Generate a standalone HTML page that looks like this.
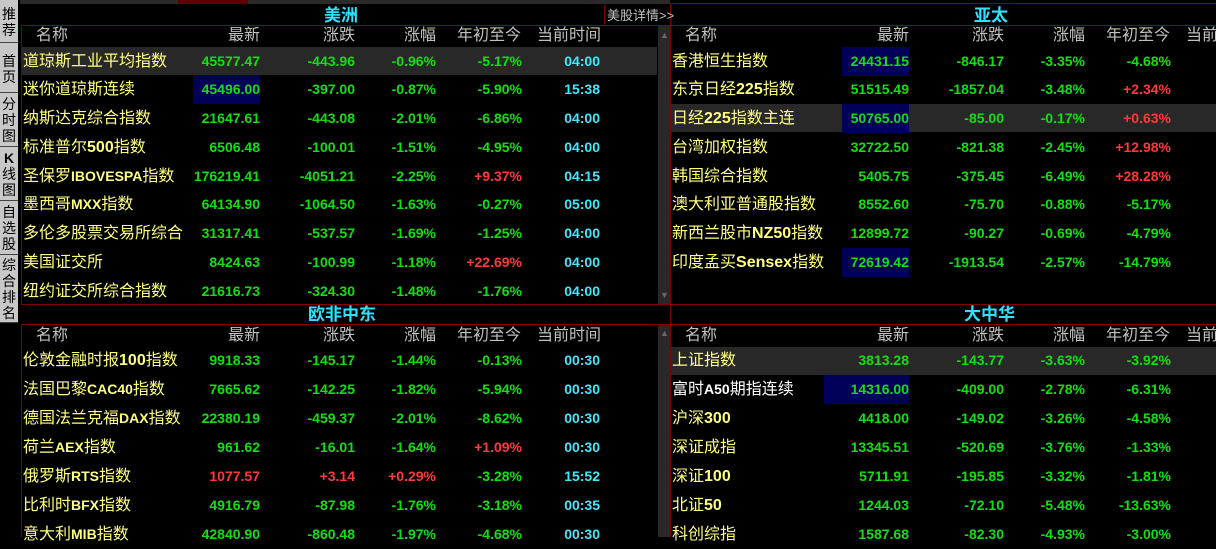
<!DOCTYPE html>
<html><head><meta charset="utf-8"><style>
*{margin:0;padding:0;box-sizing:border-box}
body{width:1216px;height:537px;background:#000;position:relative;overflow:hidden;font-family:"Liberation Sans","Noto Sans CJK SC",sans-serif}
div{position:absolute;white-space:nowrap}
.side{left:0;width:18px;background:#c8c8c8;border-bottom:1px solid #444;color:#000;font-size:14px;line-height:16px;text-align:center;overflow:hidden}
.hl{background:#282828}
.bx{background:#000058}
.ln{background:#800000}
.t{color:#30e0ff;font-size:17px;font-weight:bold;line-height:20px}
.h{color:#c0c0c0;font-size:16px;line-height:20px}
.r{height:29px;line-height:29px;font-size:14px;font-weight:bold}
.nm{color:#ffff80;font-size:16px;font-weight:normal}
.g{color:#10e010}.rd{color:#ff3838}.cy{color:#40e8ff}
.a{text-align:right}
</style></head><body>
<div style="left:20px;top:0;width:650px;height:4px;background:#2a2a2a"></div>
<div style="left:178px;top:0;width:70px;height:4px;background:#600000"></div>
<div class="side" style="top:0;height:43px;padding-top:6px">推<br>荐</div>
<div class="side" style="top:43px;height:50px;padding-top:10px">首<br>页</div>
<div class="side" style="top:93px;height:54px;padding-top:3px">分<br>时<br>图</div>
<div class="side" style="top:147px;height:54px;padding-top:3px"><b>K</b><br>线<br>图</div>
<div class="side" style="top:201px;height:54px;padding-top:3px">自<br>选<br>股</div>
<div class="side" style="top:255px;height:68px;padding-top:2px">综<br>合<br>排<br>名</div>
<div class="ln" style="left:670px;top:3px;width:546px;height:1px"></div>
<div class="ln" style="left:670px;top:25px;width:546px;height:1px"></div>
<div class="ln" style="left:21px;top:25px;width:650px;height:1px"></div>
<div class="ln" style="left:21px;top:25px;width:1px;height:279px"></div>
<div class="ln" style="left:21px;top:304px;width:1195px;height:1px"></div>
<div class="ln" style="left:21px;top:324px;width:1195px;height:1px"></div>
<div class="ln" style="left:21px;top:324px;width:1px;height:213px"></div>
<div class="ln" style="left:670px;top:3px;width:1px;height:534px"></div>
<div class="ln" style="left:604px;top:5px;width:1px;height:21px"></div>
<div style="left:658px;top:26px;width:12px;height:278px;background:#282828"></div>
<div style="left:658px;top:325px;width:12px;height:212px;background:#282828"></div>
<div style="left:660px;top:30px;color:#666;font-size:9px">▲</div>
<div style="left:660px;top:290px;color:#666;font-size:9px">▼</div>
<div style="left:660px;top:328px;color:#666;font-size:9px">▲</div>
<div class="t" style="left:324px;top:6px">美洲</div>
<div class="t" style="left:974px;top:6px">亚太</div>
<div class="t" style="left:308px;top:305px">欧非中东</div>
<div class="t" style="left:964px;top:305px">大中华</div>
<div style="left:607px;top:7px;color:#c0c0c0;font-size:13px;line-height:18px">美股详情&gt;&gt;</div>
<div class="hl" style="left:22px;top:47px;width:635px;height:28px"></div>
<div class="bx" style="left:193px;top:75px;width:67px;height:29px"></div>
<div class="bx" style="left:842px;top:47px;width:67px;height:29px"></div>
<div class="hl" style="left:671px;top:104px;width:545px;height:28px"></div>
<div class="bx" style="left:842px;top:104px;width:67px;height:29px"></div>
<div class="bx" style="left:842px;top:248px;width:67px;height:29px"></div>
<div class="hl" style="left:671px;top:347px;width:545px;height:28px"></div>
<div class="bx" style="left:824px;top:375px;width:85px;height:29px"></div>

<div class="h" style="left:36px;top:26px">名称</div><div class="h a" style="left:160px;width:100px;top:26px">最新</div><div class="h a" style="left:255px;width:100px;top:26px">涨跌</div><div class="h a" style="left:336px;width:100px;top:26px">涨幅</div><div class="h" style="left:457px;top:26px">年初至今</div><div class="h" style="left:537px;top:26px">当前时间</div>
<div class="h" style="left:685px;top:26px">名称</div><div class="h a" style="left:809px;width:100px;top:26px">最新</div><div class="h a" style="left:904px;width:100px;top:26px">涨跌</div><div class="h a" style="left:985px;width:100px;top:26px">涨幅</div><div class="h" style="left:1106px;top:26px">年初至今</div><div class="h" style="left:1186px;top:26px">当前时间</div>
<div class="h" style="left:36px;top:326px">名称</div><div class="h a" style="left:160px;width:100px;top:326px">最新</div><div class="h a" style="left:255px;width:100px;top:326px">涨跌</div><div class="h a" style="left:336px;width:100px;top:326px">涨幅</div><div class="h" style="left:457px;top:326px">年初至今</div><div class="h" style="left:537px;top:326px">当前时间</div>
<div class="h" style="left:685px;top:326px">名称</div><div class="h a" style="left:809px;width:100px;top:326px">最新</div><div class="h a" style="left:904px;width:100px;top:326px">涨跌</div><div class="h a" style="left:985px;width:100px;top:326px">涨幅</div><div class="h" style="left:1106px;top:326px">年初至今</div><div class="h" style="left:1186px;top:326px">当前时间</div>

<div class="r" style="left:0;top:47px;width:660px"><div class="nm" style="left:23px">道琼斯工业平均指数</div><div class="g a" style="left:160px;width:100px">45577.47</div><div class="g a" style="left:255px;width:100px">-443.96</div><div class="g a" style="left:336px;width:100px">-0.96%</div><div class="g a" style="left:422px;width:100px">-5.17%</div><div class="cy a" style="left:500px;width:100px">04:00</div></div>
<div class="r" style="left:0;top:75px;width:660px"><div class="nm" style="left:23px">迷你道琼斯连续</div><div class="g a" style="left:160px;width:100px">45496.00</div><div class="g a" style="left:255px;width:100px">-397.00</div><div class="g a" style="left:336px;width:100px">-0.87%</div><div class="g a" style="left:422px;width:100px">-5.90%</div><div class="cy a" style="left:500px;width:100px">15:38</div></div>
<div class="r" style="left:0;top:104px;width:660px"><div class="nm" style="left:23px">纳斯达克综合指数</div><div class="g a" style="left:160px;width:100px">21647.61</div><div class="g a" style="left:255px;width:100px">-443.08</div><div class="g a" style="left:336px;width:100px">-2.01%</div><div class="g a" style="left:422px;width:100px">-6.86%</div><div class="cy a" style="left:500px;width:100px">04:00</div></div>
<div class="r" style="left:0;top:133px;width:660px"><div class="nm" style="left:23px">标准普尔<b>500</b>指数</div><div class="g a" style="left:160px;width:100px">6506.48</div><div class="g a" style="left:255px;width:100px">-100.01</div><div class="g a" style="left:336px;width:100px">-1.51%</div><div class="g a" style="left:422px;width:100px">-4.95%</div><div class="cy a" style="left:500px;width:100px">04:00</div></div>
<div class="r" style="left:0;top:162px;width:660px"><div class="nm" style="left:23px">圣保罗<b style="font-size:14px">IBOVESPA</b>指数</div><div class="g a" style="left:160px;width:100px">176219.41</div><div class="g a" style="left:255px;width:100px">-4051.21</div><div class="g a" style="left:336px;width:100px">-2.25%</div><div class="rd a" style="left:422px;width:100px">+9.37%</div><div class="cy a" style="left:500px;width:100px">04:15</div></div>
<div class="r" style="left:0;top:190px;width:660px"><div class="nm" style="left:23px">墨西哥<b style="font-size:14px">MXX</b>指数</div><div class="g a" style="left:160px;width:100px">64134.90</div><div class="g a" style="left:255px;width:100px">-1064.50</div><div class="g a" style="left:336px;width:100px">-1.63%</div><div class="g a" style="left:422px;width:100px">-0.27%</div><div class="cy a" style="left:500px;width:100px">05:00</div></div>
<div class="r" style="left:0;top:219px;width:660px"><div class="nm" style="left:23px">多伦多股票交易所综合</div><div class="g a" style="left:160px;width:100px">31317.41</div><div class="g a" style="left:255px;width:100px">-537.57</div><div class="g a" style="left:336px;width:100px">-1.69%</div><div class="g a" style="left:422px;width:100px">-1.25%</div><div class="cy a" style="left:500px;width:100px">04:00</div></div>
<div class="r" style="left:0;top:248px;width:660px"><div class="nm" style="left:23px">美国证交所</div><div class="g a" style="left:160px;width:100px">8424.63</div><div class="g a" style="left:255px;width:100px">-100.99</div><div class="g a" style="left:336px;width:100px">-1.18%</div><div class="rd a" style="left:422px;width:100px">+22.69%</div><div class="cy a" style="left:500px;width:100px">04:00</div></div>
<div class="r" style="left:0;top:277px;width:660px"><div class="nm" style="left:23px">纽约证交所综合指数</div><div class="g a" style="left:160px;width:100px">21616.73</div><div class="g a" style="left:255px;width:100px">-324.30</div><div class="g a" style="left:336px;width:100px">-1.48%</div><div class="g a" style="left:422px;width:100px">-1.76%</div><div class="cy a" style="left:500px;width:100px">04:00</div></div>

<div class="r" style="left:649px;top:47px;width:567px"><div class="nm" style="left:23px">香港恒生指数</div><div class="g a" style="left:160px;width:100px">24431.15</div><div class="g a" style="left:255px;width:100px">-846.17</div><div class="g a" style="left:336px;width:100px">-3.35%</div><div class="g a" style="left:422px;width:100px">-4.68%</div></div>
<div class="r" style="left:649px;top:75px;width:567px"><div class="nm" style="left:23px">东京日经<b>225</b>指数</div><div class="g a" style="left:160px;width:100px">51515.49</div><div class="g a" style="left:255px;width:100px">-1857.04</div><div class="g a" style="left:336px;width:100px">-3.48%</div><div class="rd a" style="left:422px;width:100px">+2.34%</div></div>
<div class="r" style="left:649px;top:104px;width:567px"><div class="nm" style="left:23px">日经<b>225</b>指数主连</div><div class="g a" style="left:160px;width:100px">50765.00</div><div class="g a" style="left:255px;width:100px">-85.00</div><div class="g a" style="left:336px;width:100px">-0.17%</div><div class="rd a" style="left:422px;width:100px">+0.63%</div></div>
<div class="r" style="left:649px;top:133px;width:567px"><div class="nm" style="left:23px">台湾加权指数</div><div class="g a" style="left:160px;width:100px">32722.50</div><div class="g a" style="left:255px;width:100px">-821.38</div><div class="g a" style="left:336px;width:100px">-2.45%</div><div class="rd a" style="left:422px;width:100px">+12.98%</div></div>
<div class="r" style="left:649px;top:162px;width:567px"><div class="nm" style="left:23px">韩国综合指数</div><div class="g a" style="left:160px;width:100px">5405.75</div><div class="g a" style="left:255px;width:100px">-375.45</div><div class="g a" style="left:336px;width:100px">-6.49%</div><div class="rd a" style="left:422px;width:100px">+28.28%</div></div>
<div class="r" style="left:649px;top:190px;width:567px"><div class="nm" style="left:23px">澳大利亚普通股指数</div><div class="g a" style="left:160px;width:100px">8552.60</div><div class="g a" style="left:255px;width:100px">-75.70</div><div class="g a" style="left:336px;width:100px">-0.88%</div><div class="g a" style="left:422px;width:100px">-5.17%</div></div>
<div class="r" style="left:649px;top:219px;width:567px"><div class="nm" style="left:23px">新西兰股市<b>NZ50</b>指数</div><div class="g a" style="left:160px;width:100px">12899.72</div><div class="g a" style="left:255px;width:100px">-90.27</div><div class="g a" style="left:336px;width:100px">-0.69%</div><div class="g a" style="left:422px;width:100px">-4.79%</div></div>
<div class="r" style="left:649px;top:248px;width:567px"><div class="nm" style="left:23px">印度孟买<b>Sensex</b>指数</div><div class="g a" style="left:160px;width:100px">72619.42</div><div class="g a" style="left:255px;width:100px">-1913.54</div><div class="g a" style="left:336px;width:100px">-2.57%</div><div class="g a" style="left:422px;width:100px">-14.79%</div></div>

<div class="r" style="left:0;top:346px;width:660px"><div class="nm" style="left:23px">伦敦金融时报<b>100</b>指数</div><div class="g a" style="left:160px;width:100px">9918.33</div><div class="g a" style="left:255px;width:100px">-145.17</div><div class="g a" style="left:336px;width:100px">-1.44%</div><div class="g a" style="left:422px;width:100px">-0.13%</div><div class="cy a" style="left:500px;width:100px">00:30</div></div>
<div class="r" style="left:0;top:375px;width:660px"><div class="nm" style="left:23px">法国巴黎<b style="font-size:14px">CAC40</b>指数</div><div class="g a" style="left:160px;width:100px">7665.62</div><div class="g a" style="left:255px;width:100px">-142.25</div><div class="g a" style="left:336px;width:100px">-1.82%</div><div class="g a" style="left:422px;width:100px">-5.94%</div><div class="cy a" style="left:500px;width:100px">00:30</div></div>
<div class="r" style="left:0;top:404px;width:660px"><div class="nm" style="left:23px">德国法兰克福<b style="font-size:14px">DAX</b>指数</div><div class="g a" style="left:160px;width:100px">22380.19</div><div class="g a" style="left:255px;width:100px">-459.37</div><div class="g a" style="left:336px;width:100px">-2.01%</div><div class="g a" style="left:422px;width:100px">-8.62%</div><div class="cy a" style="left:500px;width:100px">00:30</div></div>
<div class="r" style="left:0;top:433px;width:660px"><div class="nm" style="left:23px">荷兰<b style="font-size:14px">AEX</b>指数</div><div class="g a" style="left:160px;width:100px">961.62</div><div class="g a" style="left:255px;width:100px">-16.01</div><div class="g a" style="left:336px;width:100px">-1.64%</div><div class="rd a" style="left:422px;width:100px">+1.09%</div><div class="cy a" style="left:500px;width:100px">00:30</div></div>
<div class="r" style="left:0;top:462px;width:660px"><div class="nm" style="left:23px">俄罗斯<b style="font-size:14px">RTS</b>指数</div><div class="rd a" style="left:160px;width:100px">1077.57</div><div class="rd a" style="left:255px;width:100px">+3.14</div><div class="rd a" style="left:336px;width:100px">+0.29%</div><div class="g a" style="left:422px;width:100px">-3.28%</div><div class="cy a" style="left:500px;width:100px">15:52</div></div>
<div class="r" style="left:0;top:491px;width:660px"><div class="nm" style="left:23px">比利时<b style="font-size:14px">BFX</b>指数</div><div class="g a" style="left:160px;width:100px">4916.79</div><div class="g a" style="left:255px;width:100px">-87.98</div><div class="g a" style="left:336px;width:100px">-1.76%</div><div class="g a" style="left:422px;width:100px">-3.18%</div><div class="cy a" style="left:500px;width:100px">00:35</div></div>
<div class="r" style="left:0;top:520px;width:660px"><div class="nm" style="left:23px">意大利<b style="font-size:14px">MIB</b>指数</div><div class="g a" style="left:160px;width:100px">42840.90</div><div class="g a" style="left:255px;width:100px">-860.48</div><div class="g a" style="left:336px;width:100px">-1.97%</div><div class="g a" style="left:422px;width:100px">-4.68%</div><div class="cy a" style="left:500px;width:100px">00:30</div></div>

<div class="r" style="left:649px;top:346px;width:567px"><div class="nm" style="left:23px">上证指数</div><div class="g a" style="left:160px;width:100px">3813.28</div><div class="g a" style="left:255px;width:100px">-143.77</div><div class="g a" style="left:336px;width:100px">-3.63%</div><div class="g a" style="left:422px;width:100px">-3.92%</div></div>
<div class="r" style="left:649px;top:375px;width:567px"><div class="nm" style="left:23px;color:#fff">富时<b style="font-size:14px">A50</b>期指连续</div><div class="g a" style="left:160px;width:100px">14316.00</div><div class="g a" style="left:255px;width:100px">-409.00</div><div class="g a" style="left:336px;width:100px">-2.78%</div><div class="g a" style="left:422px;width:100px">-6.31%</div></div>
<div class="r" style="left:649px;top:404px;width:567px"><div class="nm" style="left:23px">沪深<b>300</b></div><div class="g a" style="left:160px;width:100px">4418.00</div><div class="g a" style="left:255px;width:100px">-149.02</div><div class="g a" style="left:336px;width:100px">-3.26%</div><div class="g a" style="left:422px;width:100px">-4.58%</div></div>
<div class="r" style="left:649px;top:433px;width:567px"><div class="nm" style="left:23px">深证成指</div><div class="g a" style="left:160px;width:100px">13345.51</div><div class="g a" style="left:255px;width:100px">-520.69</div><div class="g a" style="left:336px;width:100px">-3.76%</div><div class="g a" style="left:422px;width:100px">-1.33%</div></div>
<div class="r" style="left:649px;top:462px;width:567px"><div class="nm" style="left:23px">深证<b>100</b></div><div class="g a" style="left:160px;width:100px">5711.91</div><div class="g a" style="left:255px;width:100px">-195.85</div><div class="g a" style="left:336px;width:100px">-3.32%</div><div class="g a" style="left:422px;width:100px">-1.81%</div></div>
<div class="r" style="left:649px;top:491px;width:567px"><div class="nm" style="left:23px">北证<b>50</b></div><div class="g a" style="left:160px;width:100px">1244.03</div><div class="g a" style="left:255px;width:100px">-72.10</div><div class="g a" style="left:336px;width:100px">-5.48%</div><div class="g a" style="left:422px;width:100px">-13.63%</div></div>
<div class="r" style="left:649px;top:520px;width:567px"><div class="nm" style="left:23px">科创综指</div><div class="g a" style="left:160px;width:100px">1587.68</div><div class="g a" style="left:255px;width:100px">-82.30</div><div class="g a" style="left:336px;width:100px">-4.93%</div><div class="g a" style="left:422px;width:100px">-3.00%</div></div>
</body></html>
